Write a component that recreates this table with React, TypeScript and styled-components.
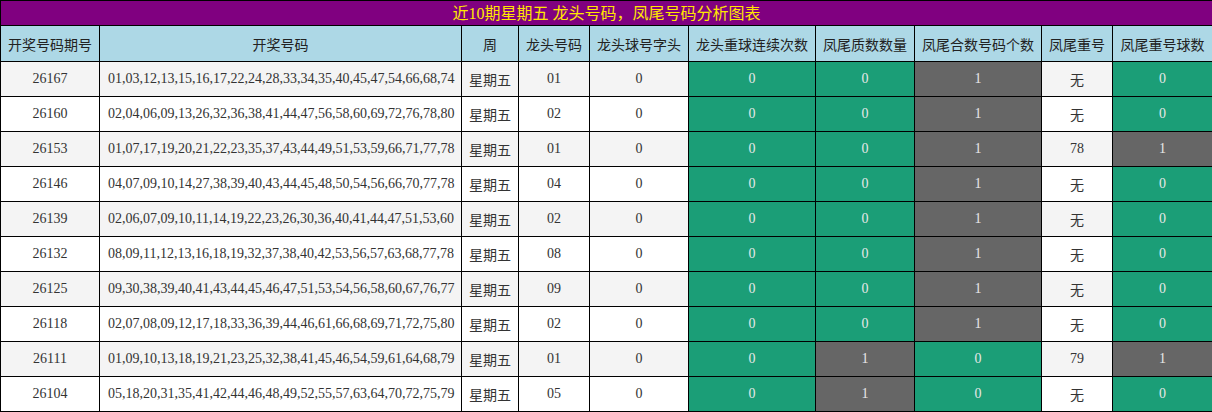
import React from "react";
import styled, { createGlobalStyle } from "styled-components";

const GlobalStyle = createGlobalStyle`
  html, body { margin: 0; padding: 0; background: #ffffff; }
  body { font-family: "Liberation Serif", "Noto Sans CJK SC", serif; }
`;

const Table = styled.table`
  width: 1212px;
  border-collapse: collapse;
  table-layout: fixed;
  font-family: "Liberation Serif", "Noto Sans CJK SC", serif;
  font-size: 14px;
  color: #333333;
`;

const TitleCell = styled.th`
  background: #800080;
  color: #ffe600;
  font-size: 16px;
  font-weight: normal;
  height: 24px;
  padding: 0;
  border: 1px solid #000000;
  text-align: center;
  vertical-align: middle;
  line-height: 23px;
`;

const HeadCell = styled.th`
  background: #add8e6;
  color: #222222;
  font-weight: normal;
  height: 35px;
  padding: 0;
  border: 1px solid #000000;
  text-align: center;
  vertical-align: middle;
  white-space: nowrap;
`;

const Row = styled.tr<{ $alt: boolean }>`
  background: ${(p) => (p.$alt ? "#f4f4f4" : "#ffffff")};
`;

const Cell = styled.td<{ $tone?: "green" | "gray" }>`
  height: 34px;
  padding: 0;
  border: 1px solid #000000;
  text-align: center;
  vertical-align: middle;
  white-space: nowrap;
  background: ${(p) =>
    p.$tone === "green" ? "#1b9e77" : p.$tone === "gray" ? "#666666" : "transparent"};
  color: ${(p) => (p.$tone ? "#e8e8e8" : "#333333")};
`;

const NumbersCell = styled(Cell)`
  text-align: left;
  padding-left: 8px;
`;

const widths = [99, 362, 57, 71, 99, 127, 99, 127, 71, 100];

const headers = [
  "开奖号码期号",
  "开奖号码",
  "周",
  "龙头号码",
  "龙头球号字头",
  "龙头重球连续次数",
  "凤尾质数数量",
  "凤尾合数号码个数",
  "凤尾重号",
  "凤尾重号球数",
];

type Rec = {
  id: string;
  nums: string;
  head: string;
  prime: number;
  comp: number;
  rep: string;
  repCount: number;
};

const rows: Rec[] = [
  { id: "26167", nums: "01,03,12,13,15,16,17,22,24,28,33,34,35,40,45,47,54,66,68,74", head: "01", prime: 0, comp: 1, rep: "无", repCount: 0 },
  { id: "26160", nums: "02,04,06,09,13,26,32,36,38,41,44,47,56,58,60,69,72,76,78,80", head: "02", prime: 0, comp: 1, rep: "无", repCount: 0 },
  { id: "26153", nums: "01,07,17,19,20,21,22,23,35,37,43,44,49,51,53,59,66,71,77,78", head: "01", prime: 0, comp: 1, rep: "78", repCount: 1 },
  { id: "26146", nums: "04,07,09,10,14,27,38,39,40,43,44,45,48,50,54,56,66,70,77,78", head: "04", prime: 0, comp: 1, rep: "无", repCount: 0 },
  { id: "26139", nums: "02,06,07,09,10,11,14,19,22,23,26,30,36,40,41,44,47,51,53,60", head: "02", prime: 0, comp: 1, rep: "无", repCount: 0 },
  { id: "26132", nums: "08,09,11,12,13,16,18,19,32,37,38,40,42,53,56,57,63,68,77,78", head: "08", prime: 0, comp: 1, rep: "无", repCount: 0 },
  { id: "26125", nums: "09,30,38,39,40,41,43,44,45,46,47,51,53,54,56,58,60,67,76,77", head: "09", prime: 0, comp: 1, rep: "无", repCount: 0 },
  { id: "26118", nums: "02,07,08,09,12,17,18,33,36,39,44,46,61,66,68,69,71,72,75,80", head: "02", prime: 0, comp: 1, rep: "无", repCount: 0 },
  { id: "26111", nums: "01,09,10,13,18,19,21,23,25,32,38,41,45,46,54,59,61,64,68,79", head: "01", prime: 1, comp: 0, rep: "79", repCount: 1 },
  { id: "26104", nums: "05,18,20,31,35,41,42,44,46,48,49,52,55,57,63,64,70,72,75,79", head: "05", prime: 1, comp: 0, rep: "无", repCount: 0 },
];

const tone = (v: number) => (v === 0 ? "green" : "gray");

export default function App() {
  return (
    <>
      <GlobalStyle />
      <Table>
        <colgroup>
          {widths.map((w, i) => (
            <col key={i} style={{ width: w }} />
          ))}
        </colgroup>
        <thead>
          <tr>
            <TitleCell colSpan={10}>近10期星期五 龙头号码，凤尾号码分析图表</TitleCell>
          </tr>
          <tr>
            {headers.map((h) => (
              <HeadCell key={h}>{h}</HeadCell>
            ))}
          </tr>
        </thead>
        <tbody>
          {rows.map((r, i) => (
            <Row key={r.id} $alt={i % 2 === 0}>
              <Cell>{r.id}</Cell>
              <NumbersCell>{r.nums}</NumbersCell>
              <Cell>星期五</Cell>
              <Cell>{r.head}</Cell>
              <Cell>0</Cell>
              <Cell $tone="green">0</Cell>
              <Cell $tone={tone(r.prime)}>{r.prime}</Cell>
              <Cell $tone={tone(r.comp)}>{r.comp}</Cell>
              <Cell>{r.rep}</Cell>
              <Cell $tone={tone(r.repCount)}>{r.repCount}</Cell>
            </Row>
          ))}
        </tbody>
      </Table>
    </>
  );
}
